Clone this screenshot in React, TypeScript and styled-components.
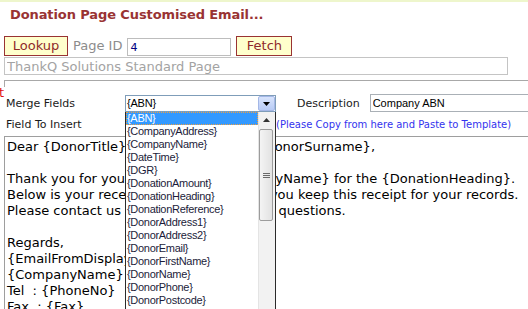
import React from "react";
import styled, { createGlobalStyle } from "styled-components";

const Global = createGlobalStyle`
  html, body { margin: 0; padding: 0; background: #fff; overflow: hidden; }
  body { font-family: "DejaVu Sans", Verdana, sans-serif; width: 528px; height: 309px; }
`;

const Page = styled.div`
  width: 528px;
  height: 309px;
  overflow: hidden;
  display: flex;
  flex-direction: column;
`;

const TopStrip = styled.div`
  height: 2px;
  flex: none;
  background: #eef6cc;
`;

const Title = styled.h1`
  flex: none;
  margin: 5px 0 0 10px;
  font-size: 13px;
  line-height: 16px;
  font-weight: bold;
  letter-spacing: -0.1px;
  color: #993333;
  white-space: nowrap;
`;

const LookupRow = styled.div`
  flex: none;
  display: flex;
  align-items: flex-start;
  margin: 13px 0 0 4px;
  height: 20px;
`;

const ActionButton = styled.button<{ $w: number }>`
  box-sizing: border-box;
  width: ${(p) => p.$w}px;
  height: 20px;
  padding: 0;
  margin: 0;
  border: 1px solid #993333;
  background: #ffffcc;
  color: #8f2a2a;
  font-family: "DejaVu Sans", Verdana, sans-serif;
  font-size: 13px;
  line-height: 18px;
  text-align: center;
`;

const FieldLabel = styled.span`
  margin: 0 5px 0 5px;
  font-size: 13px;
  line-height: 20px;
  color: #8c8c8c;
`;

const IdInput = styled.input`
  box-sizing: border-box;
  width: 104px;
  height: 18px;
  margin: 2px 5px 0 0;
  padding: 0 2px;
  border: 1px solid #bdbdbd;
  font-family: "DejaVu Sans", Verdana, sans-serif;
  font-size: 11px;
  color: #000080;
  outline: none;
`;

const PageNameInput = styled.input`
  flex: none;
  box-sizing: border-box;
  width: 504px;
  height: 18px;
  margin: 1px 0 0 4px;
  padding: 0 2px;
  border: 1px solid #c4c4c4;
  font-family: "DejaVu Sans", Verdana, sans-serif;
  font-size: 13px;
  color: #a3a3a3;
  outline: none;
`;

const RuleBox = styled.div`
  flex: none;
  height: 6px;
  margin: 5px 0 0 4px;
  border-top: 1px solid #a8a8a8;
  border-left: 1px solid #a8a8a8;
`;

const ClippedMark = styled.div`
  flex: none;
  height: 8px;
  font-size: 13px;
  line-height: 12px;
  color: #e01010;
  text-indent: -1px;
  overflow: visible;
`;

const MergeGrid = styled.div`
  flex: none;
  display: grid;
  grid-template-columns: 119px 151px 1fr;
  grid-template-rows: 17px 24px;
  margin-left: 6px;
  align-items: center;
`;

const SmallLabel = styled.span`
  font-size: 11px;
  color: #1a1a1a;
  white-space: nowrap;
`;

const SelectWrap = styled.div`
  position: relative;
  align-self: stretch;
  z-index: 2;
`;

const SelectBox = styled.div`
  box-sizing: border-box;
  height: 17px;
  border: 1px solid #7f9db9;
  background: #fff;
  display: flex;
  align-items: stretch;
`;

const SelectValue = styled.span`
  flex: 1;
  padding-left: 1px;
  font-family: "Liberation Sans", Arial, sans-serif;
  font-size: 11px;
  letter-spacing: -0.2px;
  line-height: 15px;
  color: #000;
`;

const ArrowButton = styled.span`
  box-sizing: border-box;
  width: 17px;
  height: 15px;
  border: 1px solid #a4b7e6;
  border-radius: 2px;
  background: linear-gradient(#d8e4fc, #b8cbf6);
  display: flex;
  align-items: center;
  justify-content: center;
`;

const DropList = styled.div`
  position: absolute;
  left: 0;
  top: 17px;
  box-sizing: border-box;
  width: 151px;
  height: 215px;
  border: 1px solid #2b2b2b;
  border-top: none;
  background: #fff;
  display: flex;
`;

const Options = styled.ul`
  flex: 1;
  margin: 0;
  padding: 0;
  list-style: none;
`;

const Option = styled.li<{ $active?: boolean }>`
  box-sizing: border-box;
  height: 13px;
  padding-left: 1px;
  font-family: "Liberation Sans", Arial, sans-serif;
  font-size: 11px;
  letter-spacing: -0.3px;
  line-height: 13px;
  white-space: nowrap;
  color: ${(p) => (p.$active ? "#fff" : "#1c1c3a")};
  background: ${(p) => (p.$active ? "#3399ff" : "transparent")};
  outline: ${(p) => (p.$active ? "1px dotted #f0a040" : "none")};
  outline-offset: -1px;
`;

const ScrollTrack = styled.div`
  width: 16px;
  background: #f2f2f2;
  border-left: 1px solid #e4e4e4;
  display: flex;
  flex-direction: column;
  align-items: flex-start;
`;

const ScrollArrow = styled.div`
  width: 15px;
  height: 16px;
  display: flex;
  align-items: center;
  justify-content: center;
`;

const ScrollThumb = styled.div`
  box-sizing: border-box;
  width: 14px;
  height: 92px;
  margin-top: 1px;
  border: 1px solid #9c9c9c;
  border-radius: 2px;
  background: linear-gradient(90deg, #f4f4f4, #e2e2e2);
  display: flex;
  align-items: center;
  justify-content: center;
`;

const DescCell = styled.div`
  display: flex;
  align-items: center;
  padding-left: 21px;
  align-self: start;
  margin-top: -1px;
`;

const DescInput = styled.input`
  box-sizing: border-box;
  width: 200px;
  height: 18px;
  margin-left: 10px;
  padding: 0 2px;
  border: 1px solid #aab0b6;
  font-family: "Liberation Sans", Arial, sans-serif;
  font-size: 11px;
  color: #000;
  outline: none;
`;

const Hint = styled.span`
  font-size: 10px;
  color: #3333ee;
  white-space: nowrap;
`;

const TemplateArea = styled.textarea`
  flex: none;
  box-sizing: border-box;
  width: 560px;
  height: 200px;
  margin: 0 0 0 4px;
  padding: 2px 2px;
  border: 1px solid #9e9e9e;
  font-family: "DejaVu Sans", Verdana, sans-serif;
  font-size: 13px;
  line-height: 16px;
  color: #000;
  white-space: pre;
  overflow: hidden;
  resize: none;
  outline: none;
`;

const fields = [
  "{ABN}",
  "{CompanyAddress}",
  "{CompanyName}",
  "{DateTime}",
  "{DGR}",
  "{DonationAmount}",
  "{DonationHeading}",
  "{DonationReference}",
  "{DonorAddress1}",
  "{DonorAddress2}",
  "{DonorEmail}",
  "{DonorFirstName}",
  "{DonorName}",
  "{DonorPhone}",
  "{DonorPostcode}",
];

const template = [
  "Dear {DonorTitle} {DonorFirstName} {DonorSurname},",
  "",
  "Thank you for your donation to {CompanyName} for the {DonationHeading}.",
  "Below is your receipt. Please make sure you keep this receipt for your records.",
  "Please contact us if you have any further questions.",
  "",
  "Regards,",
  "{EmailFromDisplayName}",
  "{CompanyName}",
  "Tel  : {PhoneNo}",
  "Fax  : {Fax}",
].join("\n");

export default function App() {
  return (
    <>
      <Global />
      <Page>
        <TopStrip />
        <Title>Donation Page Customised Email...</Title>
        <LookupRow>
          <ActionButton $w={64}>Lookup</ActionButton>
          <FieldLabel>Page ID</FieldLabel>
          <IdInput readOnly value="4" />
          <ActionButton $w={56}>Fetch</ActionButton>
        </LookupRow>
        <PageNameInput readOnly value="ThankQ Solutions Standard Page" />
        <RuleBox />
        <ClippedMark>t</ClippedMark>
        <MergeGrid>
          <SmallLabel>Merge Fields</SmallLabel>
          <SelectWrap>
            <SelectBox>
              <SelectValue>{"{ABN}"}</SelectValue>
              <ArrowButton>
                <svg width="7" height="4" viewBox="0 0 7 4">
                  <path d="M0 0h7L3.5 4z" fill="#000" />
                </svg>
              </ArrowButton>
            </SelectBox>
            <DropList>
              <Options>
                {fields.map((f, i) => (
                  <Option key={f} $active={i === 0}>
                    {f}
                  </Option>
                ))}
              </Options>
              <ScrollTrack>
                <ScrollArrow>
                  <svg width="7" height="4" viewBox="0 0 7 4">
                    <path d="M3.5 0L7 4H0z" fill="#333" />
                  </svg>
                </ScrollArrow>
                <ScrollThumb>
                  <svg width="7" height="7" viewBox="0 0 7 7">
                    <path d="M0 1.5h7M0 3.5h7M0 5.5h7" stroke="#6a6a6a" strokeWidth="1" />
                  </svg>
                </ScrollThumb>
              </ScrollTrack>
            </DropList>
          </SelectWrap>
          <DescCell>
            <SmallLabel>Description</SmallLabel>
            <DescInput readOnly value="Company ABN" />
          </DescCell>
          <SmallLabel>Field To Insert</SmallLabel>
          <span />
          <Hint>(Please Copy from here and Paste to Template)</Hint>
        </MergeGrid>
        <TemplateArea readOnly value={template} />
      </Page>
    </>
  );
}
